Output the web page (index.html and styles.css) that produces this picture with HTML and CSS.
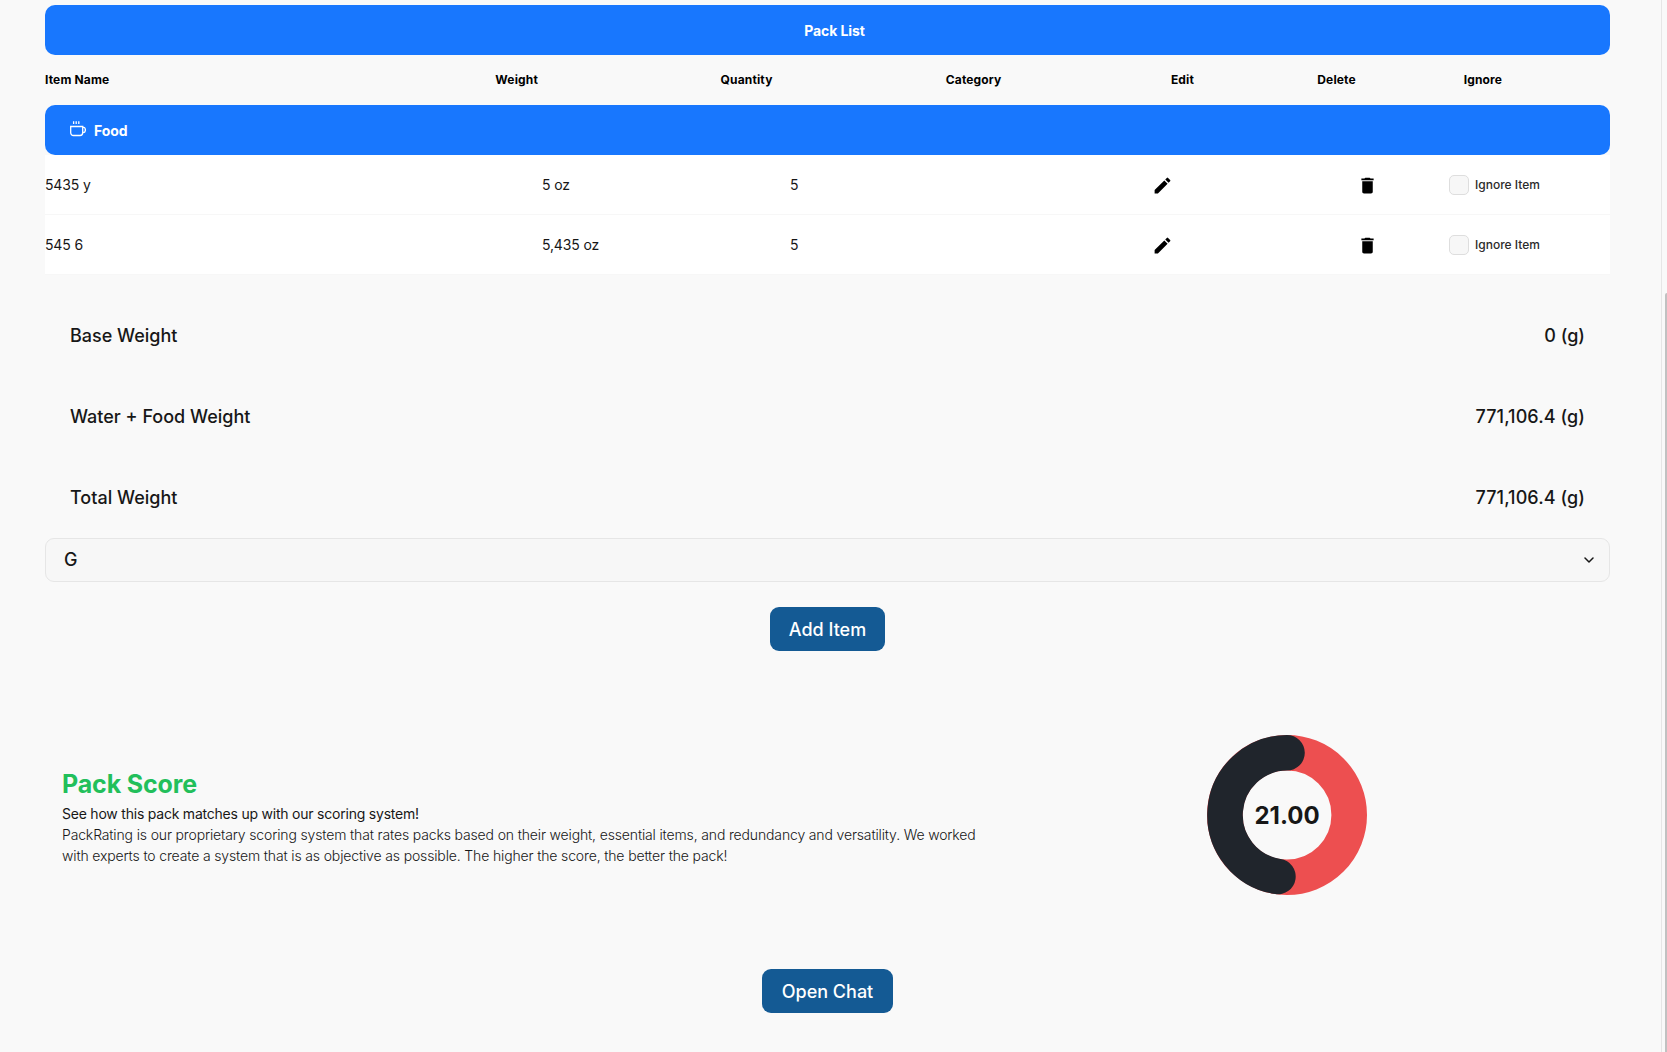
FILE: index.html
```html
<!DOCTYPE html>
<html lang="en">
<head>
<meta charset="utf-8">
<title>Pack List</title>
<link rel="stylesheet" href="styles.css">
</head>
<body>
<svg class="sprite" aria-hidden="true">
  <symbol id="pencil" viewBox="0 0 24 24"><path d="M3 17.25V21h3.75L17.81 9.94l-3.75-3.75L3 17.25zM20.71 7.04a1 1 0 0 0 0-1.41l-2.34-2.34a1 1 0 0 0-1.41 0l-1.83 1.83 3.75 3.75 1.83-1.83z"/></symbol>
  <symbol id="trash" viewBox="0 0 24 24"><path d="M6 19c0 1.1.9 2 2 2h8c1.1 0 2-.9 2-2V7H6v12zM19 4h-3.5l-1-1h-5l-1 1H5v2h14V4z"/></symbol>
</svg>
<div class="page">
  <main class="content">
    <div class="bar bar-title">Pack List</div>
    <div class="columns">
      <span class="wide">Item Name</span><span>Weight</span><span>Quantity</span><span>Category</span><span class="narrow">Edit</span><span class="narrow">Delete</span><span class="narrow">Ignore</span>
    </div>
    <div class="bar bar-category">
      <svg class="cup" width="16" height="16" viewBox="0 0 16 16"><path d="M3.6.2v2.9M6.2.2v2.9M8.8.2v2.9M.7 5.5h12v6.3a2.7 2.7 0 0 1-2.7 2.7H3.4A2.7 2.7 0 0 1 .7 11.8zM12.7 6.2h.4a2.3 2.7 0 0 1 0 5.4h-.6"/></svg>
      <span>Food</span>
    </div>
    <div class="item">
      <span>5435 y</span><span>5 oz</span><span>5</span>
      <svg class="icon" viewBox="0 0 24 24"><use href="#pencil"/></svg>
      <svg class="icon" viewBox="0 0 24 24"><use href="#trash"/></svg>
      <label class="ignore"><span class="box"></span>Ignore Item</label>
    </div>
    <div class="item">
      <span>545 6</span><span>5,435 oz</span><span>5</span>
      <svg class="icon" viewBox="0 0 24 24"><use href="#pencil"/></svg>
      <svg class="icon" viewBox="0 0 24 24"><use href="#trash"/></svg>
      <label class="ignore"><span class="box"></span>Ignore Item</label>
    </div>
    <div class="totals">
      <div class="total"><span>Base Weight</span><span>0 (g)</span></div>
      <div class="total"><span>Water + Food Weight</span><span class="amount">771,106.4 (g)</span></div>
      <div class="total"><span>Total Weight</span><span class="amount">771,106.4 (g)</span></div>
    </div>
    <div class="select">
      <span>G</span>
      <svg class="chevron" width="10" height="6" viewBox="0 0 10 6"><path d="M1 1l4 4 4-4"/></svg>
    </div>
    <button class="button add">Add Item</button>
    <section class="score">
      <div class="score-text">
        <h2>Pack Score</h2>
        <p class="lead">See how this pack matches up with our scoring system!</p>
        <p class="body">PackRating is our proprietary scoring system that rates packs based on their weight, essential items, and redundancy and versatility. We worked<br>with experts to create a system that is as objective as possible. The higher the score, the better the pack!</p>
      </div>
      <svg class="donut" width="160" height="160" viewBox="0 0 160 160">
        <circle class="ring" cx="80" cy="80" r="62.2"/>
        <path class="arc" d="M80 17.8A62.2 62.2 0 0 0 70.9 141.5"/>
        <text x="80" y="88.5">21.00</text>
      </svg>
    </section>
    <button class="button chat">Open Chat</button>
  </main>
  <div class="scroll"><div class="thumb"></div></div>
</div>
</body>
</html>
```
FILE: styles.css
```css
* { box-sizing: border-box; }
body {
  margin: 0;
  background: #f9f9f9;
  color: #171717;
  font-family: Inter, "Liberation Sans", sans-serif;
  overflow: hidden;
}
.sprite { display: none; }
.page { display: flex; justify-content: space-between; height: 1052px; }
.content { display: flex; flex-direction: column; width: 1565px; margin-left: 45px; padding-top: 5px; }
.bar {
  display: flex;
  align-items: center;
  height: 50px;
  border-radius: 10px;
  background: #1877fe;
  color: #fff;
  font-size: 14px;
  font-weight: 700;
  letter-spacing: -.1px;
}
.bar-title { justify-content: center; padding-left: 14px; }
.bar-category { padding: 0 25px; gap: 8px; }
.cup { fill: none; stroke: #fff; stroke-width: 1.3; margin-top: -2px; }
.columns {
  display: flex;
  align-items: center;
  height: 50px;
  padding-bottom: 2px;
  color: #000;
  font-size: 12px;
  font-weight: 700;
  letter-spacing: .15px;
}
.columns span { flex: 1 1 0; }
.columns .wide { flex-grow: 2; }
.columns .narrow { flex-grow: .65; }
.item {
  display: grid;
  grid-template-columns: 497px 248px 362px 205px 92px 1fr;
  align-items: center;
  height: 60px;
  border-bottom: 1px solid #f7f7f7;
  background: #fff;
  font-size: 14px;
  letter-spacing: -.15px;
}
.icon { width: 21px; height: 21px; margin-top: 1px; fill: #000; }
.ignore { display: flex; align-items: center; gap: 6px; font-size: 12px; font-weight: 500; letter-spacing: 0; color: #2b2b2b; }
.box { width: 20px; height: 20px; border: 1px solid #dedede; border-radius: 5px; background: #f7f7f7; }
.totals { padding: 20px 25px 0; height: 263px; }
.total { display: flex; justify-content: space-between; align-items: center; height: 81px; font-size: 18px; font-weight: 500; }
.amount { letter-spacing: .08px; }
.select {
  display: flex;
  justify-content: space-between;
  align-items: center;
  height: 44px;
  padding: 0 15px 0 18px;
  border: 1px solid #e6e6e6;
  border-radius: 9px;
  background: #f7f7f7;
  font-size: 18px;
  font-weight: 500;
}
.select span { padding-bottom: 2px; }
.chevron { fill: none; stroke: #171717; stroke-width: 1.5; stroke-linecap: round; stroke-linejoin: round; }
.button {
  align-self: center;
  height: 44px;
  padding: 1px 0 0;
  border: 0;
  border-radius: 9px;
  background: #145a94;
  color: #fff;
  font: 500 18px/43px Inter, "Liberation Sans", sans-serif;
}
.add { width: 115px; margin-top: 25px; }
.chat { width: 131px; }
.score { display: flex; align-items: center; justify-content: space-between; height: 318px; padding: 0 243px 0 17px; }
.score-text { padding-top: 10px; }
.score h2 { margin: 0; color: #22bf5b; font-size: 25px; font-weight: 700; line-height: 38px; letter-spacing: -.15px; }
.score p { margin: 0; font-size: 14px; line-height: 21px; white-space: nowrap; }
.score .lead { letter-spacing: -.22px; }
.score .body { font-weight: 300; letter-spacing: -.145px; }
.donut { margin-top: 10px; }
.ring, .arc { fill: none; stroke-width: 35.6; }
.ring { stroke: #ed4f50; }
.arc { stroke: #20252c; stroke-linecap: round; }
.donut text { font-size: 24px; font-weight: 700; text-anchor: middle; fill: #171717; }
.scroll { width: 6px; border-left: 1px solid #e6e6e6; padding: 293px 0 0 3px; }
.thumb { height: 759px; border-radius: 3px 0 0 0; background: #c1c1c1; }
```
